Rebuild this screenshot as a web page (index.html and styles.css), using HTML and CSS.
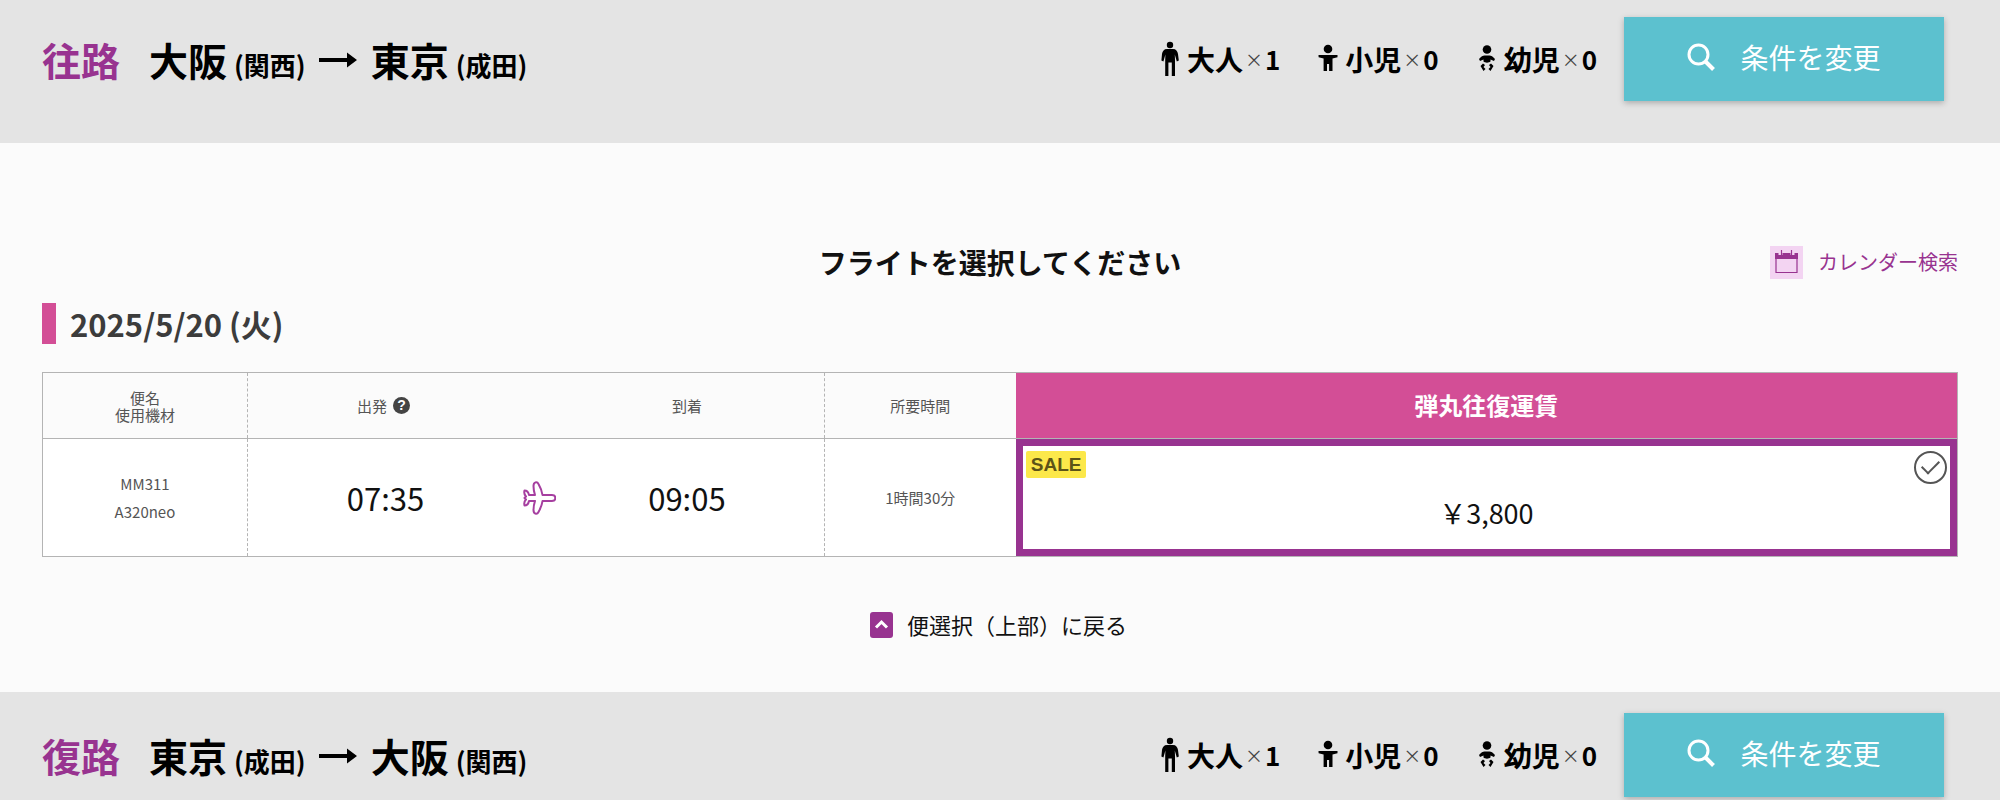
FILE: index.html
```html
<!DOCTYPE html>
<html lang="ja">

<head>
    <meta charset="UTF-8">
    <title>フライト選択</title>
    <meta name="viewport" content="width=device-width,initial-scale=1">
    <link rel="stylesheet" href="styles.css">
</head>

<body>
    <svg class="sprite" aria-hidden="true">
        <symbol id="arrow" viewBox="0 0 38 16">
            <path d="M0 6h28V0.500L38 8 28 15.500V10H0z" />
        </symbol>
        <symbol id="adult" viewBox="0 0 20 36">
            <circle cx="10" cy="4" r="3.200" />
            <path d="M7 8h6c3 0 4.500 2 5 5l.8 6.500-2 1-2-7L15 19v16h-3.200V21.500H8.400V35H5.200V19l.2-5.500-2 7-2-1L2 13c.5-3 2-5 5-5z" />
        </symbol>
        <symbol id="child" viewBox="0 0 20 36">
            <circle cx="10" cy="8" r="4.300" />
            <path d="M.5 14h19v2.200l-5 1.300V30h-3.400v-7H9v7H5.600V17.500l-5-1.300z" />
        </symbol>
        <symbol id="infant" viewBox="0 0 20 36">
            <circle cx="10" cy="8.500" r="4.300" />
            <path d="M2 18c2-2.500 4-3.500 5.500-3.500h5c1.500 0 3.500 1 5.500 3.500l-1 2-3.500-1.500v2c-1.500 1.500-5.500 1.500-7 0v-2L3 20zM3.500 25L6 22.500l2 1.500-1.500 2L8.500 28l-2 2zM16.500 25L14 22.500 12 24l1.500 2-2 2 2 2z" />
        </symbol>
        <symbol id="search" viewBox="0 0 28 28">
            <g fill="none" stroke="currentColor" stroke-width="3">
                <circle cx="11.500" cy="11.500" r="9.500" />
                <path d="M18 18l8.500 8.500" stroke-width="4" />
            </g>
        </symbol>
        <symbol id="plane" viewBox="0 0 33 34">
            <path d="M12 14C11 11 10.500 8 10.500 5c0-4 3.500-5 5-2 2 3.500 3.500 7 4 11H29c4.500 0 4.500 6 0 6h-9.500c-.5 4-2 7.500-4 11-1.500 3-5 2-5-2 0-3 .5-6 1.500-9H6c-.5 2.500-2 4.500-4.500 4.500C1 22.500 1.500 20 3 18.500L1.500 17 3 15.500C1.500 14 1 11.500 1.500 9.500 4 9.500 5.500 11.500 6 14z" fill="none" stroke="currentColor" stroke-width="2" stroke-linejoin="round" />
        </symbol>
        <symbol id="calendar" viewBox="0 0 33 33">
            <path d="M5 7h23v6H5z" />
            <path d="M6 12.500h21V26.500H6z" fill="none" stroke="currentColor" stroke-width="1.200" />
            <path d="M10.500 4v5M22.500 4v5" stroke="#f3d4f2" stroke-width="4" />
            <path d="M11.500 4v5M21.500 4v5" stroke="currentColor" stroke-width="1.200" />
        </symbol>
    </svg>

    <header class="leg">
        <h1 class="route">
            <span class="direction">往路</span>
            <span class="city">大阪</span>
            <span class="airport">(関西)</span>
            <svg class="arrow"><use href="#arrow" /></svg>
            <span class="city">東京</span>
            <span class="airport">(成田)</span>
        </h1>
        <ul class="pax">
            <li><svg><use href="#adult" /></svg>大人<span class="times">×</span><span class="count">1</span></li>
            <li><svg><use href="#child" /></svg>小児<span class="times">×</span><span class="count">0</span></li>
            <li><svg><use href="#infant" /></svg>幼児<span class="times">×</span><span class="count">0</span></li>
        </ul>
        <button class="change" type="button"><svg><use href="#search" /></svg>条件を変更</button>
    </header>

    <main>
        <div class="title">
            <h2>フライトを選択してください</h2>
            <a class="calendar" href="#"><svg><use href="#calendar" /></svg>カレンダー検索</a>
        </div>
        <h3 class="date">2025/5/20 (火)</h3>

        <table class="flights">
            <colgroup>
                <col class="col-name">
                <col class="col-dep">
                <col class="col-plane">
                <col class="col-arr">
                <col class="col-time">
                <col>
            </colgroup>
            <thead>
                <tr>
                    <th class="name">便名<br>使用機材</th>
                    <th><div class="dep">出発<button class="help" type="button">?</button></div></th>
                    <th></th>
                    <th class="arr">到着</th>
                    <th class="duration">所要時間</th>
                    <th class="fare-name">弾丸往復運賃</th>
                </tr>
            </thead>
            <tbody>
                <tr>
                    <td class="name">MM311<br>A320neo</td>
                    <td class="clock">07:35</td>
                    <td class="plane"><svg><use href="#plane" /></svg></td>
                    <td class="clock arr">09:05</td>
                    <td class="duration">1時間30分</td>
                    <td class="fare">
                        <label>
                            <span class="fare-top">
                                <span class="sale">SALE</span>
                                <input type="radio" name="fare" checked>
                            </span>
                            <span class="price">￥3,800</span>
                        </label>
                    </td>
                </tr>
            </tbody>
        </table>

        <a class="back" href="#"><svg viewBox="0 0 23 26"><path d="M6 15.500l5.500-5.500 5.500 5.500" /></svg>便選択（上部）に戻る</a>
    </main>

    <header class="leg">
        <h1 class="route">
            <span class="direction">復路</span>
            <span class="city">東京</span>
            <span class="airport">(成田)</span>
            <svg class="arrow"><use href="#arrow" /></svg>
            <span class="city">大阪</span>
            <span class="airport">(関西)</span>
        </h1>
        <ul class="pax">
            <li><svg><use href="#adult" /></svg>大人<span class="times">×</span><span class="count">1</span></li>
            <li><svg><use href="#child" /></svg>小児<span class="times">×</span><span class="count">0</span></li>
            <li><svg><use href="#infant" /></svg>幼児<span class="times">×</span><span class="count">0</span></li>
        </ul>
        <button class="change" type="button"><svg><use href="#search" /></svg>条件を変更</button>
    </header>
</body>

</html>
```

FILE: styles.css
```css
* {
    margin: 0;
    padding: 0;
    box-sizing: border-box;
}

body {
    font-family: "Noto Sans CJK JP", sans-serif;
    background-color: #fbfbfb;
    color: #111;
}

a {
    text-decoration: none;
}

button {
    border: 0;
    font-family: inherit;
    cursor: pointer;
}

svg {
    fill: currentColor;
    flex: none;
}

.sprite {
    display: none;
}

/* route bar */
.leg {
    display: flex;
    align-items: center;
    background-color: #e4e4e4;
    color: #000;
    padding: 17px 56px 42px 42px;
}

.leg:last-child {
    padding-top: 21px;
    padding-bottom: 3px;
}

.route {
    display: flex;
    align-items: baseline;
    padding-top: 6px;
    line-height: 56px;
    font-weight: bold;
}

.direction,
.city {
    font-size: 39px;
}

.direction {
    color: #983390;
    margin-right: 29px;
}

.airport {
    font-size: 26px;
    margin-left: 7px;
}

.arrow {
    width: 38px;
    height: 16px;
    margin: 0 14px 4px 13px;
    align-self: center;
}

.pax {
    display: flex;
    gap: 38px;
    margin-left: auto;
    margin-right: 27px;
    list-style: none;
    font-size: 28px;
    font-weight: bold;
    line-height: 40px;
}

.pax li {
    display: flex;
    align-items: center;
}

.pax svg {
    width: 20px;
    height: 36px;
    margin-right: 7px;
}

.times {
    margin: 0 2px;
    font-size: 18px;
    font-weight: normal;
    color: #444;
}

.count {
    font-size: 26px;
}

.change {
    display: flex;
    align-items: center;
    justify-content: center;
    gap: 25px;
    width: 320px;
    height: 84px;
    padding-bottom: 5px;
    background-color: #5cc1cf;
    color: #fff;
    font-size: 28px;
    box-shadow: 0 2px 6px rgba(0, 0, 0, .25);
}

.change svg {
    width: 28px;
    height: 28px;
}

/* flight list */
main {
    padding: 97px 42px 50px;
}

.title {
    display: grid;
    grid-template-columns: 1fr auto 1fr;
    align-items: center;
}

.title h2 {
    grid-column: 2;
    font-size: 28px;
    line-height: 44px;
}

.calendar {
    display: flex;
    align-items: center;
    justify-self: end;
    gap: 15px;
    color: #983390;
    font-size: 20px;
    line-height: 32px;
}

.calendar svg {
    width: 33px;
    height: 33px;
    background-color: #f3d4f2;
}

.date {
    margin-top: 19px;
    padding-left: 14px;
    border-left: 14px solid #d34e96;
    color: #3c3c3c;
    font-size: 31px;
    line-height: 41px;
}

.flights {
    width: 100%;
    margin-top: 28px;
    table-layout: fixed;
    border-collapse: collapse;
    border: 1px solid #b4b4b4;
    text-align: center;
    color: #555;
    font-size: 15px;
}

.flights th {
    font-weight: normal;
}

.flights thead tr {
    height: 66px;
    border-bottom: 1px solid #b4b4b4;
}

.flights tbody tr {
    height: 118px;
    background-color: #fff;
}

.col-name {
    width: 10.7%;
}

.col-dep {
    width: 14.4%;
}

.col-plane {
    width: 33px;
}

.col-arr {
    width: 14%;
}

.col-time {
    width: 10%;
}

.name {
    border-right: 1px dashed #b4b4b4;
}

th.name {
    line-height: 17px;
}

td.name {
    line-height: 28px;
}

.arr {
    padding-right: 6px;
}

.duration {
    border-left: 1px dashed #b4b4b4;
}

.dep {
    display: flex;
    align-items: center;
    justify-content: center;
    gap: 6px;
    padding-right: 4px;
}

.help {
    width: 17px;
    height: 17px;
    border-radius: 50%;
    background-color: #444;
    color: #fff;
    font: bold 14px/17px "Liberation Sans", sans-serif;
}

.clock {
    font-size: 31px;
    color: #111;
}

.plane svg {
    display: block;
    width: 33px;
    height: 34px;
    color: #a63fa0;
}

.flights .fare-name {
    padding-bottom: 2px;
    background-color: #d34e96;
    color: #fff;
    font-size: 24px;
    font-weight: bold;
}

.fare label {
    display: block;
    height: 117px;
    padding: 5px 3px;
    border: 7px solid #983390;
    cursor: pointer;
}

.fare-top {
    display: flex;
    justify-content: space-between;
    align-items: flex-start;
}

.sale {
    padding: 0 5px;
    border-radius: 2px;
    background-color: #fce84a;
    color: #5c5418;
    font: bold 19px/27px "Liberation Sans", sans-serif;
}

.fare input {
    display: flex;
    align-items: center;
    justify-content: center;
    width: 33px;
    height: 33px;
    border: 2px solid #555;
    border-radius: 50%;
    appearance: none;
}

.fare input::after {
    content: "";
    width: 15px;
    height: 8px;
    margin-bottom: 5px;
    border: solid #555;
    border-width: 0 0 2px 2px;
    transform: rotate(-45deg);
}

.price {
    display: block;
    color: #111;
    font-size: 27px;
    line-height: 58px;
}

.back {
    display: flex;
    align-items: center;
    justify-content: center;
    gap: 14px;
    margin-top: 50px;
    padding-right: 3px;
    color: #111;
    font-size: 22px;
    line-height: 35px;
}

.back svg {
    width: 23px;
    height: 26px;
    border-radius: 3px;
    background-color: #983390;
    fill: none;
    stroke: #fff;
    stroke-width: 3;
}
```
